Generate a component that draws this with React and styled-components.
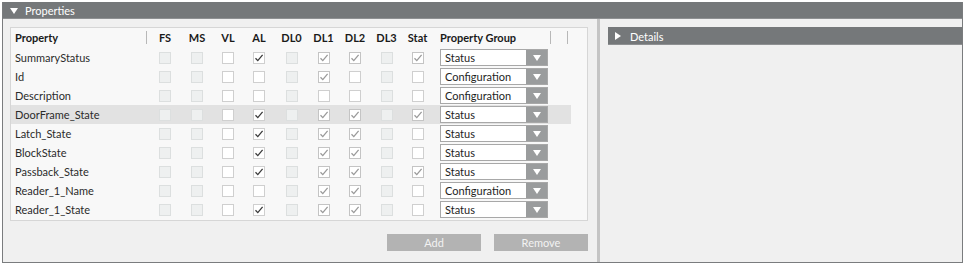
import React from "react";
import styled, { createGlobalStyle } from "styled-components";

const GlobalStyle = createGlobalStyle`
  body {
    margin: 0;
    background: #ffffff;
    font-family: Lato, "Noto Sans", sans-serif;
  }
`;

const Frame = styled.div`
  box-sizing: border-box;
  margin: 2px 0 0 2px;
  width: 961px;
  height: 261px;
  border: 1px solid #7a7c7e;
  border-top: none;
  display: flex;
  flex-direction: column;
  background: #f0f0f0;
`;

const Bar = styled.div`
  display: flex;
  align-items: center;
  gap: 7px;
  height: ${(p) => p.h || 17}px;
  padding-left: ${(p) => p.pl || 7}px;
  background: #75787a;
  color: #ffffff;
  font-size: 11px;
  box-shadow: inset 0 -1px 0 #8e9092;
`;

const Arrow = styled.span`
  width: 0;
  height: 0;
  ${(p) =>
    p.open
      ? `border-left: 4px solid transparent; border-right: 4px solid transparent; border-top: 6px solid #fff;`
      : `border-top: 4px solid transparent; border-bottom: 4px solid transparent; border-left: 6px solid #fff;`}
`;

const Body = styled.div`
  flex: 1;
  display: flex;
`;

const LeftPane = styled.div`
  width: 594px;
  padding: 8px 0 0 7px;
  box-sizing: border-box;
  display: flex;
  flex-direction: column;
`;

const Splitter = styled.div`
  width: 3px;
  background: #c4c4c4;
`;

const RightPane = styled.div`
  flex: 1;
  padding: 8px 0 0 8px;
`;

const TableBox = styled.div`
  width: 578px;
  height: 194px;
  box-sizing: border-box;
  border: 1px solid #d6d6d6;
  background: #f8f8f8;
`;

const cols = "138px 32px 32px 30px 32px 33px 31px 32px 31px 31px 1fr";

const Row = styled.div`
  display: grid;
  grid-template-columns: ${cols};
  align-items: center;
  height: 19px;
  width: 560px;
  background: ${(p) => (p.selected ? "#e2e2e2" : "transparent")};
  font-size: 11px;
  color: #2b2b2b;
  white-space: nowrap;
`;

const HeadRow = styled(Row)`
  font-weight: 700;
  color: #1a1a1a;
  margin-bottom: 1px;
`;

const HeadCell = styled.div`
  height: 100%;
  display: flex;
  align-items: center;
  justify-content: ${(p) => (p.pad != null ? "flex-start" : "center")};
  padding-left: ${(p) => p.pad || 0}px;
  box-sizing: border-box;
`;

const Sep = styled.span`
  display: inline-block;
  width: 1px;
  height: 13px;
  background: #b8b8b8;
  margin-left: ${(p) => p.ml}px;
`;

const NameCell = styled.div`
  padding-left: 4px;
`;

const Cell = styled.div`
  display: flex;
  justify-content: center;
`;

const Box = styled.div`
  box-sizing: border-box;
  width: 12px;
  height: 12px;
  border: 1px solid
    ${(p) => (p.kind === "off" ? "#dcdfdf" : p.kind === "on" ? "#c4c4c4" : "#cfcfcf")};
  background: ${(p) => (p.kind === "off" ? "#eef0f0" : "#ffffff")};
  display: flex;
  align-items: center;
  justify-content: center;
`;

const Select = styled.div`
  display: flex;
  width: 108px;
  height: 17px;
  margin-left: 7px;
  box-sizing: border-box;
  border: 1px solid #a8a8a8;
  background: #ffffff;
`;

const SelectText = styled.div`
  flex: 1;
  padding-left: 4px;
  line-height: 15px;
  font-size: 11px;
  color: #1e1e1e;
`;

const SelectButton = styled.div`
  width: 21px;
  background: #9a9c9d;
  display: flex;
  align-items: center;
  justify-content: center;
`;

const ButtonRow = styled.div`
  display: flex;
  justify-content: flex-end;
  gap: 13px;
  width: 578px;
  margin-top: 13px;
`;

const Button = styled.div`
  width: 94px;
  height: 17px;
  background: #b3b3b3;
  color: #f2f2f2;
  font-size: 11px;
  display: flex;
  align-items: center;
  justify-content: center;
`;

function Check({ kind, checked }) {
  const stroke = kind === "al" ? "#3a3a3a" : "#9a9a9a";
  return (
    <Box kind={kind}>
      {checked ? (
        <svg width="10" height="10" viewBox="0 0 10 10">
          <path d="M1.5 5.2 L3.8 7.6 L8.6 1.8" fill="none" stroke={stroke} strokeWidth="1.3" />
        </svg>
      ) : null}
    </Box>
  );
}

const rows = [
  { name: "SummaryStatus", al: true, dl1: true, dl2: true, stat: true, group: "Status" },
  { name: "Id", al: false, dl1: true, dl2: false, stat: false, group: "Configuration" },
  { name: "Description", al: false, dl1: false, dl2: false, stat: false, group: "Configuration" },
  { name: "DoorFrame_State", al: true, dl1: true, dl2: true, stat: true, group: "Status", selected: true },
  { name: "Latch_State", al: true, dl1: true, dl2: true, stat: false, group: "Status" },
  { name: "BlockState", al: true, dl1: true, dl2: true, stat: false, group: "Status" },
  { name: "Passback_State", al: true, dl1: true, dl2: true, stat: true, group: "Status" },
  { name: "Reader_1_Name", al: false, dl1: true, dl2: true, stat: false, group: "Configuration" },
  { name: "Reader_1_State", al: true, dl1: true, dl2: true, stat: false, group: "Status" },
];

const heads = ["FS", "MS", "VL", "AL", "DL0", "DL1", "DL2", "DL3", "Stat"];

export default function App() {
  return (
    <>
      <GlobalStyle />
      <Frame>
        <Bar>
          <Arrow open />
          <span>Properties</span>
        </Bar>
        <Body>
          <LeftPane>
            <TableBox>
              <HeadRow>
                <HeadCell pad={4}>
                  Property
                  <Sep ml={88} />
                </HeadCell>
                {heads.map((h) => (
                  <HeadCell key={h}>{h}</HeadCell>
                ))}
                <HeadCell pad={7}>
                  Property Group
                  <Sep ml={34} />
                  <Sep ml={16} />
                </HeadCell>
              </HeadRow>
              {rows.map((r) => (
                <Row key={r.name} selected={r.selected}>
                  <NameCell>{r.name}</NameCell>
                  <Cell><Check kind="off" /></Cell>
                  <Cell><Check kind="off" /></Cell>
                  <Cell><Check kind="white" /></Cell>
                  <Cell><Check kind="al" checked={r.al} /></Cell>
                  <Cell><Check kind="off" /></Cell>
                  <Cell><Check kind={r.dl1 ? "on" : "white"} checked={r.dl1} /></Cell>
                  <Cell><Check kind={r.dl2 ? "on" : "white"} checked={r.dl2} /></Cell>
                  <Cell><Check kind="off" /></Cell>
                  <Cell><Check kind={r.stat ? "on" : "white"} checked={r.stat} /></Cell>
                  <Select>
                    <SelectText>{r.group}</SelectText>
                    <SelectButton>
                      <Arrow open />
                    </SelectButton>
                  </Select>
                </Row>
              ))}
            </TableBox>
            <ButtonRow>
              <Button>Add</Button>
              <Button>Remove</Button>
            </ButtonRow>
          </LeftPane>
          <Splitter />
          <RightPane>
            <Bar h={18} pl={7}>
              <Arrow />
              <span style={{ marginLeft: 2 }}>Details</span>
            </Bar>
          </RightPane>
        </Body>
      </Frame>
    </>
  );
}
